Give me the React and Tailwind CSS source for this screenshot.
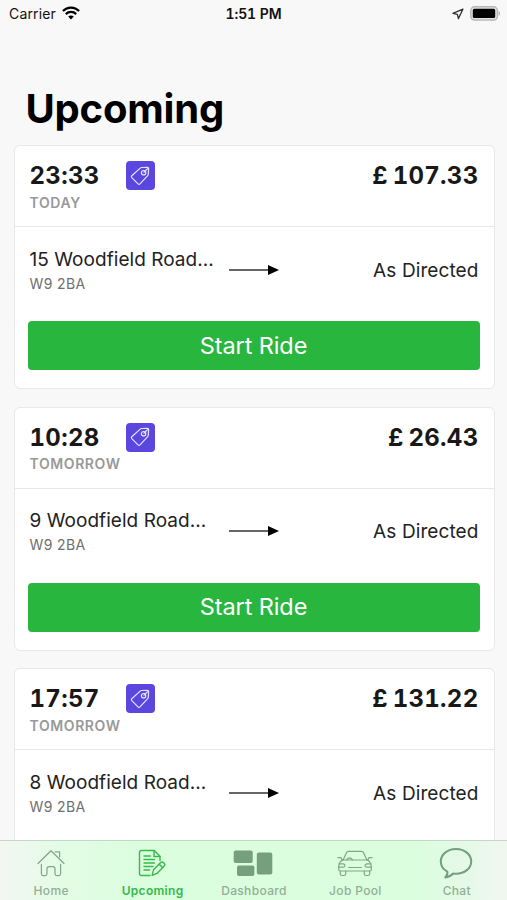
import React from 'react';

const rides = [
  { time: '23:33', day: 'TODAY', price: '£ 107.33', from: '15 Woodfield Road...', postcode: 'W9 2BA', to: 'As Directed' },
  { time: '10:28', day: 'TOMORROW', price: '£ 26.43', from: '9 Woodfield Road...', postcode: 'W9 2BA', to: 'As Directed' },
  { time: '17:57', day: 'TOMORROW', price: '£ 131.22', from: '8 Woodfield Road...', postcode: 'W9 2BA', to: 'As Directed' },
];

function WifiIcon() {
  return (
    <svg width="18" height="14" viewBox="0 0 18 14" fill="none" stroke="#000" strokeWidth="2.2">
      <path d="M0.9 5.1C5.4 0.5 12.6 0.5 17.1 5.1" />
      <path d="M3.8 8.1C6.7 5.2 11.3 5.2 14.2 8.1" />
      <path d="M6.2 10.6C7.7 9.1 10.3 9.1 11.8 10.6L9 13.5Z" fill="#000" stroke="none" />
    </svg>
  );
}

function LocationIcon() {
  return (
    <svg width="12" height="12" viewBox="0 0 12 12" fill="none" stroke="#333" strokeWidth="1.3" strokeLinejoin="round">
      <path d="M10.9 1.2L0.9 5.3L5.4 6.3L6.4 10.6Z" />
    </svg>
  );
}

function BatteryIcon() {
  return (
    <svg width="31" height="15" viewBox="0 0 31 15">
      <rect x="0.8" y="0.8" width="26.6" height="13.2" rx="3.8" fill="#e4e4e4" stroke="#b8b8b8" strokeWidth="1.5" />
      <rect x="2.8" y="2.8" width="22.4" height="9.2" rx="1.6" fill="#000" />
      <path d="M28.6 4.8C30.6 6 30.6 8.8 28.6 10Z" fill="#b3b3b3" />
    </svg>
  );
}

function TagIcon() {
  return (
    <svg width="20" height="20" viewBox="0 0 20 20" fill="none" stroke="#e7e4ff" strokeWidth="1.2" strokeLinejoin="round">
      <path d="M10.2 2.1Q10.8 1.5 11.6 1.5L17.2 1.4Q18.7 1.4 18.6 2.8L18.3 8.3Q18.2 9.1 17.7 9.7L10 17.8Q9 18.8 8 17.8L1.8 11.6Q0.9 10.6 1.8 9.7Z" />
      <circle cx="13.6" cy="6.7" r="2.2" />
      <path d="M13.6 6.5L17.8 2.4" />
    </svg>
  );
}

function Arrow() {
  return (
    <svg width="50" height="12" viewBox="0 0 50 12">
      <path d="M0 6H40" stroke="#333" strokeWidth="1.4" />
      <path d="M39 0.9L50 6L39 11.1Z" fill="#000" />
    </svg>
  );
}

function HomeIcon() {
  return (
    <svg width="28" height="28" viewBox="0 0 28 28" fill="none" stroke="currentColor" strokeWidth="1.2" strokeLinejoin="round" strokeLinecap="round">
      <path d="M1 14.5L14 1.7L27 14.5" />
      <path d="M4.4 15.4V24.8Q4.4 26.6 6.2 26.6H8.2Q10 26.6 10 24.8V20Q10 17.6 12.2 17.6H15.8Q18 17.6 18 20V24.8Q18 26.6 19.8 26.6H21.8Q23.6 26.6 23.6 24.8V15.4" />
      <path d="M18.2 2.8H22.6V8" />
    </svg>
  );
}

function UpcomingIcon() {
  return (
    <svg width="28" height="28" viewBox="0 0 28 28" fill="none" stroke="currentColor" strokeWidth="1.4" strokeLinejoin="round" strokeLinecap="round">
      <path d="M12 26.5H3.5Q1.5 26.5 1.5 24.5V3.5Q1.5 1.5 3.5 1.5H16.2L22 7.3V11.5" />
      <path d="M16 1.8V7.5H21.8" />
      <path d="M6 7H12.5M6 10.5H16.5M6 14H16.5M6 17.5H15M6 21H11.5" />
      <path d="M14.1 26.3L15.5 20.8L22.7 13.5Q24 12.4 25.5 13.8L26 14.3Q27.5 15.8 26.2 17.1L19 24.4Z" />
      <path d="M21.2 15.2L24.6 18.6" />
    </svg>
  );
}

function DashboardIcon() {
  return (
    <svg width="40" height="28" viewBox="0 0 40 28" fill="currentColor">
      <rect x="0.7" y="1.4" width="19" height="12.6" rx="2" />
      <rect x="4" y="16.5" width="17.4" height="10.5" rx="2" />
      <rect x="23.8" y="3.5" width="15.5" height="22" rx="2" />
    </svg>
  );
}

function CarIcon() {
  return (
    <svg width="36" height="28" viewBox="0 0 36 28" fill="none" stroke="currentColor" strokeWidth="1.2" strokeLinejoin="round" strokeLinecap="round">
      <path d="M6.2 11L9.3 4Q10 2.4 11.6 2.4H24.4Q26 2.4 26.7 4L29.8 11" />
      <path d="M5 11H31Q34 13.4 34.3 17V20.5Q34.3 22 32.8 22H3.2Q1.7 22 1.7 20.5V17Q2 13.4 5 11Z" />
      <path d="M1 8.7H4L5.6 11.4M35 8.7H32L30.4 11.4" />
      <path d="M3.3 22V24.7Q3.3 26.5 5 26.5H7Q8.7 26.5 8.7 24.7V22M27.3 22V24.7Q27.3 26.5 29 26.5H31Q32.7 26.5 32.7 24.7V22" />
      <path d="M2 14.8H6.2Q8 15 8 17Q7.8 18.2 6.2 18.2H1.8M34 14.8H29.8Q28 15 28 17Q28.2 18.2 29.8 18.2H34.2" />
      <path d="M11.5 18.5H24.5M9.5 10.8Q12.5 6.8 15.5 10.8" />
    </svg>
  );
}

function ChatIcon() {
  return (
    <svg width="34" height="32" viewBox="0 0 34 32" fill="none" stroke="currentColor" strokeWidth="2" strokeLinejoin="round">
      <path d="M17 2C8.4 2 1.8 7.5 1.8 14.4C1.8 18.8 4.2 22.3 8.3 24.6C8.8 26.6 8 28.7 6.2 30.4C9.3 30.2 12 28.8 14.2 26.5C15.1 26.7 16 26.7 17 26.7C25.6 26.7 32.2 21.3 32.2 14.4C32.2 7.5 25.6 2 17 2Z" />
    </svg>
  );
}

function StatusBar() {
  return (
    <div className="grid h-7 shrink-0 grid-cols-[1fr_auto_1fr] items-center pl-[9px] pr-[6px] text-[14px] leading-5 text-[#111]">
      <div className="flex items-center gap-[6px]">
        <span className="tracking-[0.15px]">Carrier</span>
        <span className="mb-[3px]"><WifiIcon /></span>
      </div>
      <div className="pr-[3px] text-center font-semibold tracking-[-0.1px] tabular-nums">1:51 PM</div>
      <div className="flex items-center justify-end gap-[6px] pb-px">
        <LocationIcon />
        <BatteryIcon />
      </div>
    </div>
  );
}

function RideCard({ ride }) {
  return (
    <div className="h-[244px] shrink-0 rounded-[6px] border border-[#e8e8e8] bg-white">
      <div className="flex h-[81px] justify-between border-b border-[#e8e8e8] px-[15px] pt-[15px]">
        <div>
          <div className="flex h-[29px] items-center">
            <span className="w-24 text-[24px] font-[650] leading-[29px] tracking-[0.3px] tabular-nums text-[#181818]">{ride.time}</span>
            <span className="flex h-[29px] w-[29px] items-center justify-center rounded-[4px] bg-[#5b46e0]">
              <TagIcon />
            </span>
          </div>
          <div className="mt-[2.5px] text-[14px] font-semibold leading-5 tracking-[0.6px] text-[#999]">{ride.day}</div>
        </div>
        <div className="text-[24px] font-[650] leading-[29px] tracking-[0.3px] [word-spacing:-2px] tabular-nums text-[#181818]">{ride.price}</div>
      </div>
      <div className="flex h-[94px] items-start justify-between px-[15px] pt-[19.5px]">
        <div className="flex">
          <div className="w-[199px] whitespace-nowrap">
            <div className="text-[19px] leading-[26px] tracking-[0.05px] text-[#222]">{ride.from}</div>
            <div className="text-[14px] leading-[22px] tracking-[0.4px] text-[#6e6e6e]">{ride.postcode}</div>
          </div>
          <div className="pt-[17px]"><Arrow /></div>
        </div>
        <div className="pt-[11px] text-[19px] leading-[26px] tracking-[0.1px] text-[#222]">{ride.to}</div>
      </div>
      <div className="pl-[13px] pr-[14px]">
        <button className="h-[49px] w-full rounded-[4px] bg-[#29b63f] text-[23.5px] leading-[30px] tracking-[-0.1px] text-white">Start Ride</button>
      </div>
    </div>
  );
}

const tabs = [
  { label: 'Home', icon: <HomeIcon /> },
  { label: 'Upcoming', icon: <UpcomingIcon />, active: true },
  { label: 'Dashboard', icon: <DashboardIcon />, solid: true },
  { label: 'Job Pool', icon: <CarIcon /> },
  { label: 'Chat', icon: <ChatIcon />, dark: true },
];

function TabBar() {
  return (
    <nav className="grid h-[60px] shrink-0 grid-cols-5 border-t border-[#c6d6c8] bg-[linear-gradient(90deg,#f3f7f3_0%,#e3fce5_12%,#dbfedf_28%,#dbfedf_82%,#e5f9e7_92%,#f1f7f1_100%)]">
      {tabs.map((tab) => {
        let color = 'text-[#82a68a]';
        if (tab.active) color = 'text-[#35b94a]';
        if (tab.solid || tab.dark) color = 'text-[#759f7e]';
        return (
          <div key={tab.label} className="flex flex-col items-center">
            <div className={`flex h-[42px] items-center justify-center pt-[2px] ${color}`}>{tab.icon}</div>
            <div className={`pl-px text-[12px] leading-[16px] ${tab.active ? 'font-semibold tracking-[0.3px] text-[#35b94a]' : 'font-medium tracking-[0.35px] text-[#91af96]'}`}>
              {tab.label}
            </div>
          </div>
        );
      })}
    </nav>
  );
}

export default function App() {
  return (
    <div className="flex h-[900px] w-[507px] flex-col overflow-hidden bg-[#f8f8f8] font-['Inter',sans-serif]">
      <StatusBar />
      <h1 className="mt-[56px] h-[61.25px] shrink-0 pl-[25.5px] text-[40px] font-bold leading-[50px] tracking-[-0.2px] text-black">Upcoming</h1>
      <main className="flex min-h-0 flex-1 flex-col gap-[17.5px] overflow-hidden pl-[13.5px] pr-[12.5px]">
        {rides.map((ride) => (
          <RideCard key={ride.time} ride={ride} />
        ))}
      </main>
      <TabBar />
    </div>
  );
}
